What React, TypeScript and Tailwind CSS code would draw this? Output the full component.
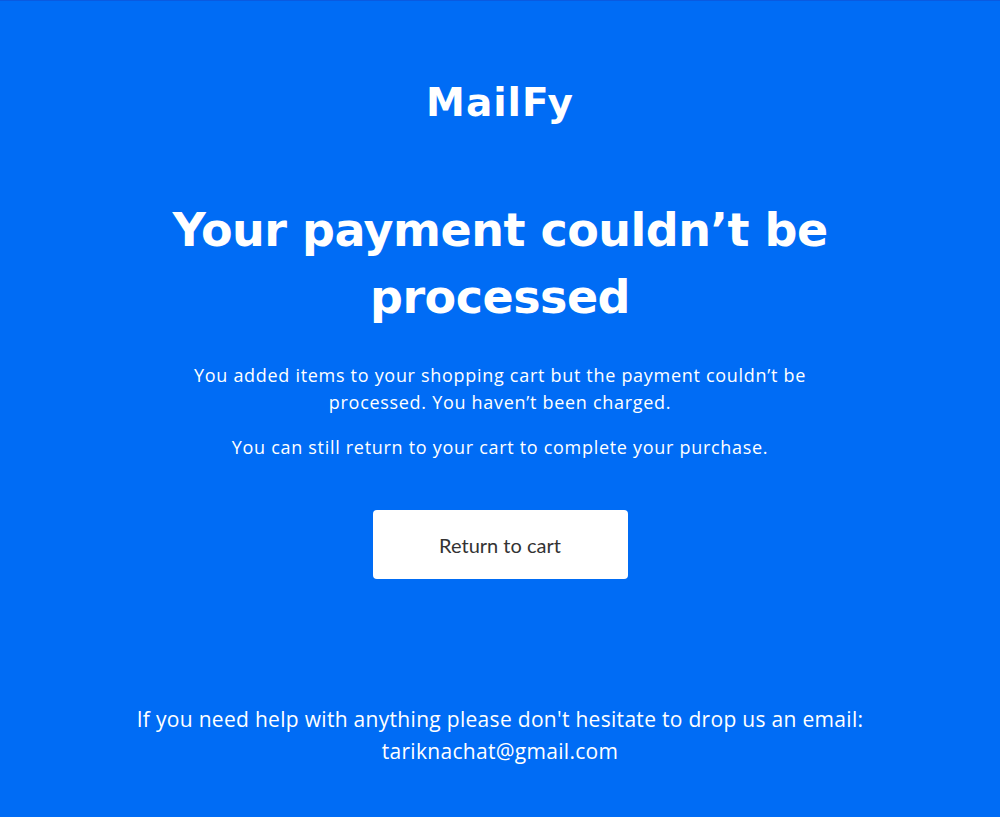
export default function App() {
  return (
    <div className="min-h-[817px] w-full bg-[#006cf5] border-t border-[#0a5ae0] flex flex-col items-center text-white font-['Open_Sans',sans-serif]">
      <h2 className="mt-[74px] text-[39px] leading-[56px] font-bold font-['DejaVu_Sans',sans-serif] tracking-[1px]">
        MailFy
      </h2>
      <h1 className="mt-[66px] w-[720px] text-center text-[46px] leading-[67px] font-bold font-['DejaVu_Sans',sans-serif] tracking-[-0.5px]">
        Your payment couldn’t be processed
      </h1>
      <div className="mt-[31px] w-[640px] text-center text-[18px] leading-[27px] tracking-[0.7px]">
        <p>
          You added items to your shopping cart but the payment couldn’t be
          processed. You haven’t been charged.
        </p>
        <p className="mt-[18px]">
          You can still return to your cart to complete your purchase.
        </p>
      </div>
      <button className="mt-[49px] w-[255px] h-[69px] rounded bg-white text-[#333] text-[20px] font-['Lato',sans-serif]">
        Return to cart
      </button>
      <p className="mt-[124px] text-center text-[21px] leading-[32px] tracking-[0.3px]">
        If you need help with anything please don't hesitate to drop us an email:
        <br />
        tariknachat@gmail.com
      </p>
    </div>
  );
}
